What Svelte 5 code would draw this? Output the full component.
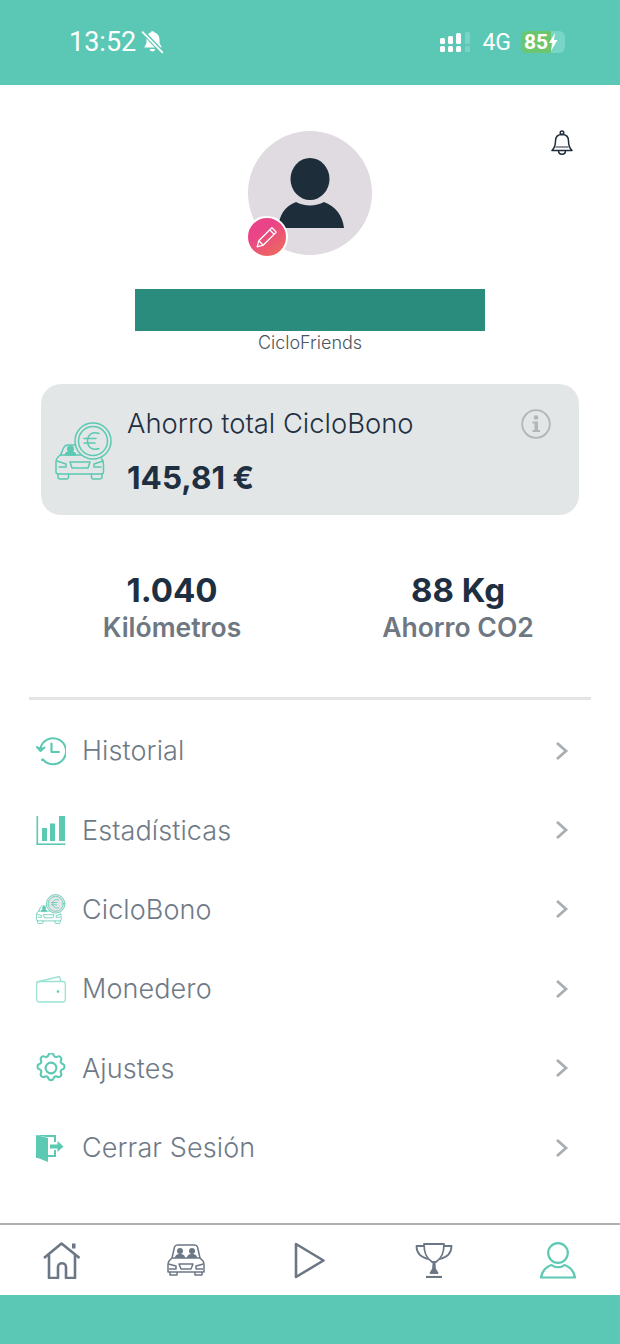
<script>
  const menu = [
    { label: 'Historial', icon: 'history' },
    { label: 'Estadísticas', icon: 'stats' },
    { label: 'CicloBono', icon: 'bono' },
    { label: 'Monedero', icon: 'wallet' },
    { label: 'Ajustes', icon: 'gear' },
    { label: 'Cerrar Sesión', icon: 'logout' }
  ];
</script>

{#snippet carCoin(size)}
  <svg width={size} height={size} viewBox="0 0 58 58" fill="none" stroke="#5cc9b2" stroke-width="1.500" stroke-linejoin="round" stroke-linecap="round">
    <path d="M30 23 H13 C10.500 23 9.500 24 8.500 26 L5.500 33" />
    <path d="M5.500 33 L3 35 C1.500 36.500 1 38 1 40 V50 C1 51.500 2 52 3.500 52 H46 C47.500 52 48.500 51.500 48.500 50 V42 C48.500 40 48 38.500 46.500 36.500" />
    <path d="M3 52 V55 C3 56.500 4 57 5 57 H11 C12.500 57 13.500 56.500 13.500 55 V52" />
    <path d="M36.500 52 V55 C36.500 56.500 37.500 57 38.500 57 H44.500 C46 57 47 56.500 47 55 V52" />
    <path d="M5.500 33 H30" />
    <path d="M2 39 L11 42 V45 H4" />
    <path d="M48 39 L39 42 V45 H46" />
    <path d="M15 40 H35 L33 46 H17 Z" />
    <circle cx="15.500" cy="27" r="2.800" fill="#5cc9b2" />
    <path d="M10.500 33 C10.500 30.500 12.500 30 15.500 30 C18.500 30 20.500 30.500 20.500 33 Z" fill="#5cc9b2" />
    <circle cx="38" cy="19" r="18" fill="#e3e6e7" />
    <circle cx="38" cy="19" r="14.500" />
    <path d="M44 11.500 C38 9 32.500 12.500 32.500 19 C32.500 25.500 38 29 44 26.500 M29 16.500 H41 M29 21 H40" />
  </svg>
{/snippet}

{#snippet menuIcon(name)}
  {#if name === 'history'}
    <svg width="30" height="30" viewBox="0 0 30 30" fill="none" stroke="#5cc9b2" stroke-width="2" stroke-linecap="round" stroke-linejoin="round">
      <path d="M4.500 12 A13 13 0 1 1 7 23.500 L6 24" />
      <path d="M1 11 L4.500 15 L8.500 11.500" fill="#5cc9b2" />
      <path d="M15.500 7.500 V16 H23" stroke-width="2.200" />
    </svg>
  {:else if name === 'stats'}
    <svg width="30" height="30" viewBox="0 0 30 30" fill="#5cc9b2">
      <rect x="0.500" y="1" width="1.600" height="29" />
      <rect x="0.500" y="28.400" width="29" height="1.600" />
      <rect x="6" y="13" width="5" height="13" />
      <rect x="14" y="8.500" width="5" height="17.500" />
      <rect x="23" y="1" width="6" height="25" />
    </svg>
  {:else if name === 'bono'}
    {@render carCoin(30)}
  {:else if name === 'wallet'}
    <svg width="30" height="28" viewBox="0 0 30 28" fill="none" stroke="#9be3d4" stroke-width="1.300" stroke-linejoin="round" stroke-linecap="round">
      <path d="M1 7 L23.500 1.500 L25 6.500" />
      <rect x="0.700" y="6.500" width="28.600" height="20.500" rx="2.500" />
      <circle cx="22" cy="16.500" r="0.700" fill="#5cc9b2" stroke="#5cc9b2" />
    </svg>
  {:else if name === 'gear'}
    <svg width="30" height="30" viewBox="2 2 20 20" fill="none" stroke="#5cc9b2" stroke-width="1.400" stroke-linecap="round" stroke-linejoin="round">
      <circle cx="12" cy="12" r="3.600" />
      <path d="M10.300 3.300 a1.800 1.800 0 0 1 3.400 0 a1.800 1.800 0 0 0 2.600 1.100 a1.800 1.800 0 0 1 2.400 2.400 a1.800 1.800 0 0 0 1.100 2.600 a1.800 1.800 0 0 1 0 3.400 a1.800 1.800 0 0 0 -1.100 2.600 a1.800 1.800 0 0 1 -2.400 2.400 a1.800 1.800 0 0 0 -2.600 1.100 a1.800 1.800 0 0 1 -3.400 0 a1.800 1.800 0 0 0 -2.600 -1.100 a1.800 1.800 0 0 1 -2.400 -2.400 a1.800 1.800 0 0 0 -1.100 -2.600 a1.800 1.800 0 0 1 0 -3.400 a1.800 1.800 0 0 0 1.100 -2.600 a1.800 1.800 0 0 1 2.400 -2.400 a1.800 1.800 0 0 0 2.600 -1.100 z" />
    </svg>
  {:else if name === 'logout'}
    <svg width="28" height="28" viewBox="0 0 28 28" fill="#5cc9b2">
      <path d="M0 1 H20 V8 H18 V3 H10 Z" />
      <path d="M0 1 L12 4 V28 L2 24 H0 Z" />
      <path d="M12 21 H18 V16 H20 V23 H12 Z" />
      <path d="M14 10.500 H21.500 V7 L27.500 12.500 L21.500 18 V14.500 H14 Z" />
    </svg>
  {/if}
{/snippet}

<div class="page">
  <header class="status">
    <div class="status-left">
      <span class="time">13:52</span>
      <svg width="24" height="24" viewBox="0 0 22 22" fill="#fff">
        <path d="M9 2 C9 0.800 12 0.800 12 2 C15.500 3 17 6 17 9 V12 L19 16 H3 L5 12 V8 C5 5 6.500 3 9 2 Z" />
        <path d="M8 17.500 H13 C13 20.500 8 20.500 8 17.500 Z" />
        <path d="M1 1 L20 21" stroke="#5ac8b4" stroke-width="4" />
        <path d="M1 1.500 L20 21" stroke="#fff" stroke-width="1.700" />
      </svg>
    </div>
    <div class="status-right">
      <svg width="32" height="20" viewBox="0 0 32 20" fill="#fff">
        <rect x="0" y="6" width="5" height="6" rx="1.500" />
        <rect x="8" y="4" width="5" height="8" rx="1.500" />
        <rect x="16" y="1" width="5" height="11" rx="1.500" />
        <rect x="25" y="0" width="5" height="12" rx="1.500" opacity="0.200" />
        <rect x="0" y="14" width="5" height="6" rx="1.500" />
        <rect x="8" y="14" width="5" height="6" rx="1.500" />
        <rect x="16" y="14" width="5" height="6" rx="1.500" />
        <rect x="25" y="14" width="5" height="6" rx="1.500" opacity="0.200" />
      </svg>
      <span class="net">4G</span>
      <div class="battery">
        <span class="pct">85</span>
        <svg width="10" height="18" viewBox="0 0 10 18" fill="#fff"><path d="M7 0 L1 10 H4.500 L3 18 L9.500 7 H6 Z" /></svg>
      </div>
    </div>
  </header>

  <main class="content">
    <button class="bell" aria-label="Notificaciones">
      <svg width="22" height="26" viewBox="0 0 22 26" fill="none" stroke="#1f2d3a" stroke-width="1.500" stroke-linejoin="round">
        <circle cx="11" cy="2.800" r="1.800" />
        <path d="M11 4.500 C6.500 4.500 4.500 7.500 4.500 11 C4.500 15 3.500 18 1 20.500 H21 C18.500 18 17.500 15 17.500 11 C17.500 7.500 15.500 4.500 11 4.500 Z" />
        <path d="M4.500 17 H17.500" stroke-width="1" />
        <path d="M7.500 20.500 C7.500 25.500 14.500 25.500 14.500 20.500" />
      </svg>
    </button>

    <section class="profile">
      <div class="avatar">
        <svg width="124" height="124" viewBox="0 0 124 124" fill="#1d2d3a">
          <ellipse cx="62" cy="48" rx="19.500" ry="21" />
          <path d="M30 97 C31.500 84 36 76 48 71 C56 75.500 68 75.500 76 71 C88 76 94.500 84 96 97 Z" />
        </svg>
        <span class="edit">
          <svg width="24" height="24" viewBox="0 0 22 22" fill="none" stroke="#fff" stroke-width="1.200" stroke-linejoin="round">
            <path d="M2 20 L3.500 14.500 L15.500 2.500 L19.500 6.500 L7.500 18.500 Z" />
            <path d="M13.500 4.500 L17.500 8.500 M3.500 14.500 L7.500 18.500" />
          </svg>
        </span>
      </div>
      <div class="redacted"></div>
      <p class="group">CicloFriends</p>
    </section>

    <section class="card">
      {@render carCoin(58)}
      <div class="card-text">
        <p class="card-title">Ahorro total CicloBono</p>
        <p class="card-value">145,81 €</p>
      </div>
      <svg class="info" width="30" height="30" viewBox="0 0 30 30" fill="#b2b6b8">
        <circle cx="15" cy="15" r="13.800" fill="none" stroke="#b2b6b8" stroke-width="1.800" />
        <circle cx="15" cy="8.500" r="2.300" />
        <path d="M11.500 12.500 H17 V21 H19 V23 H11.500 V21 H13.500 V14.500 H11.500 Z" />
      </svg>
    </section>

    <section class="stats">
      <div class="stat">
        <strong>1.040</strong>
        <span>Kilómetros</span>
      </div>
      <div class="stat">
        <strong>88 Kg</strong>
        <span>Ahorro CO2</span>
      </div>
    </section>

    <hr class="divider" />

    <ul class="menu">
      {#each menu as item}
        <li class="row">
          <span class="row-icon">{@render menuIcon(item.icon)}</span>
          <span class="row-label">{item.label}</span>
          <svg class="chevron" width="14" height="20" viewBox="0 0 14 20" fill="none" stroke="#a9aeb2" stroke-width="2.800"><path d="M2 2 L11 10 L2 18" /></svg>
        </li>
      {/each}
    </ul>
  </main>

  <nav class="tabs">
    <span class="tab">
      <svg width="38" height="37" viewBox="0 0 38 37" fill="none" stroke="#6c7785" stroke-width="2.600" stroke-linejoin="round">
        <path d="M1 16 L18.500 1.500 L36.500 16" />
        <rect x="29" y="1.500" width="3.500" height="5" fill="#6c7785" stroke="none" />
        <path d="M6 13 V36 H15 V25 C15 20 23 20 23 25 V36 H32 V13" />
      </svg>
    </span>
    <span class="tab">
      <svg width="38" height="32" viewBox="0 0 38 32" fill="none" stroke="#6c7785" stroke-width="1.500" stroke-linejoin="round">
        <path d="M5 14 L7.500 3 C8 1.500 9 1 10.500 1 H27.500 C29 1 30 1.500 30.500 3 L33 14" />
        <path d="M5 14 L2 17 C1 18.500 1 19.500 1 21 V28 H37 V21 C37 19.500 37 18.500 36 17 L33 14 Z" />
        <path d="M3 28 V31 H10 V28 M28 28 V31 H35 V28" />
        <path d="M1.500 20 L9 22 V25 H2 M36.500 20 L29 22 V25 H36" />
        <path d="M12 20 H26 L24 25 H14 Z" />
        <g fill="#6c7785" stroke="none">
          <circle cx="13" cy="7" r="3" />
          <path d="M8 14 C8 11 10 10 13 10 C16 10 18 11 18 14 Z" />
          <circle cx="25" cy="7" r="3" />
          <path d="M20 14 C20 11 22 10 25 10 C28 10 30 11 30 14 Z" />
        </g>
      </svg>
    </span>
    <span class="tab">
      <svg width="32" height="37" viewBox="0 0 32 37" fill="none" stroke="#6c7785" stroke-width="2.600" stroke-linejoin="round"><path d="M2 2 L29.500 18.500 L2 35 Z" /></svg>
    </span>
    <span class="tab">
      <svg width="38" height="36" viewBox="0 0 38 36" fill="none" stroke="#6c7785" stroke-width="1.800" stroke-linejoin="round" stroke-linecap="round">
        <path d="M9 2 H29 C29 11 27 16 21 20 H17 C11 16 9 11 9 2 Z" />
        <path d="M9 4 H1.500 C1.500 11 5 15 13 17 M29 4 H36.500 C36.500 11 33 15 25 17" />
        <path d="M18.500 20 L18 27 L15.500 31 H22.500 L20 27 L19.500 20" fill="#6c7785" />
        <path d="M11 35 H27" stroke-width="2.200" stroke-linecap="butt" />
      </svg>
    </span>
    <span class="tab">
      <svg width="36" height="37" viewBox="0 0 36 37" fill="none" stroke="#5cc9b2" stroke-width="2.200" stroke-linejoin="round">
        <circle cx="18" cy="11" r="9.800" />
        <path d="M1 35.500 C2 29 6 25 11.500 23 C15 26 21 26 24.500 23 C30 25 34 29 35 35.500 Z" />
      </svg>
    </span>
  </nav>

  <footer class="bottom"></footer>
</div>

<style>
  :global(body) {
    margin: 0;
  }

  .page {
    width: 620px;
    height: 1344px;
    display: flex;
    flex-direction: column;
    background: #fff;
    font-family: "Inter", "Liberation Sans", sans-serif;
    color: #1f2f42;
    overflow: hidden;
  }

  p {
    margin: 0;
  }

  .status {
    height: 85px;
    flex: none;
    background: #5ac8b4;
    display: flex;
    align-items: center;
    justify-content: space-between;
    padding: 0 55px 1px 69px;
    box-sizing: border-box;
    color: #fff;
    font-family: "Roboto", sans-serif;
  }

  .status-left,
  .status-right {
    display: flex;
    align-items: center;
  }

  .time {
    font-size: 27px;
    margin-right: 5px;
  }

  .net {
    font-size: 23px;
    margin-left: 10px;
    margin-right: 10px;
  }

  .battery {
    width: 44px;
    height: 22px;
    display: flex;
    align-items: center;
    background: linear-gradient(90deg, #6cc56f 0 30px, #78d6c6 30px);
    border-radius: 6px;
    padding-left: 3px;
    box-sizing: border-box;
  }

  .pct {
    font-size: 21px;
    font-weight: 700;
  }

  .content {
    flex: 1;
    position: relative;
    display: flex;
    flex-direction: column;
    align-items: center;
    padding-top: 46px;
  }

  .bell {
    position: absolute;
    top: 45px;
    left: 551px;
    padding: 0;
    border: 0;
    background: none;
    line-height: 0;
  }

  .profile {
    display: flex;
    flex-direction: column;
    align-items: center;
  }

  .avatar {
    position: relative;
    width: 124px;
    height: 124px;
    border-radius: 50%;
    background: #dfdbe0;
  }

  .edit {
    position: absolute;
    left: -2px;
    top: 85px;
    width: 38px;
    height: 38px;
    border: 2.500px solid #fff;
    border-radius: 50%;
    background: linear-gradient(145deg, #ea4488 35%, #ee7155 100%);
    display: flex;
    align-items: center;
    justify-content: center;
  }

  .redacted {
    width: 350px;
    height: 42px;
    margin-top: 34px;
    background: #2a8c7c;
  }

  .group {
    margin-top: 1px;
    font-size: 18px;
    line-height: 22px;
    font-weight: 300;
    color: #4b5560;
  }

  .card {
    width: 538px;
    height: 131px;
    box-sizing: border-box;
    margin-top: 30px;
    padding: 8px 28px 0 14px;
    display: flex;
    align-items: flex-start;
    background: #e3e6e7;
    border-radius: 20px;
  }

  .card > :global(svg:first-child) {
    margin-top: 30px;
    flex: none;
  }

  .card-text {
    flex: 1;
    margin-left: 14px;
  }

  .card-title {
    margin-top: 15px;
    font-size: 27.400px;
    line-height: 32px;
    font-weight: 300;
  }

  .card-value {
    margin-top: 19px;
    font-size: 31.500px;
    line-height: 40px;
    font-weight: 700;
  }

  .info {
    margin-top: 17px;
    flex: none;
  }

  .stats {
    width: 572px;
    margin: 55px 0 0 10px;
    display: grid;
    grid-template-columns: 1fr 1fr;
  }

  .stat {
    display: flex;
    flex-direction: column;
    align-items: center;
  }

  .stat strong {
    font-size: 33px;
    line-height: 40px;
    font-weight: 700;
  }

  .stat span {
    font-size: 26.500px;
    line-height: 34px;
    font-weight: 600;
    color: #6e7782;
  }

  .divider {
    width: 562px;
    height: 3px;
    margin: 53px 0 0;
    border: 0;
    background: #e3e5e5;
  }

  .menu {
    width: 100%;
    margin: 11px 0 0;
    padding: 0;
    list-style: none;
  }

  .row {
    height: 79.400px;
    display: flex;
    align-items: center;
    padding: 0 51px 0 36px;
    box-sizing: border-box;
  }

  .row-icon {
    width: 46px;
    display: flex;
    flex: none;
  }

  .row-label {
    flex: 1;
    font-size: 27px;
    letter-spacing: 0.100px;
    font-weight: 300;
    color: #6f7a87;
  }

  .tabs {
    flex: none;
    height: 72px;
    display: grid;
    grid-template-columns: repeat(5, 1fr);
    border-top: 2px solid #aeb0b0;
    box-sizing: border-box;
  }

  .tab {
    display: flex;
    align-items: center;
    justify-content: center;
  }

  .bottom {
    flex: none;
    height: 49px;
    background: #5ac8b4;
  }
</style>
